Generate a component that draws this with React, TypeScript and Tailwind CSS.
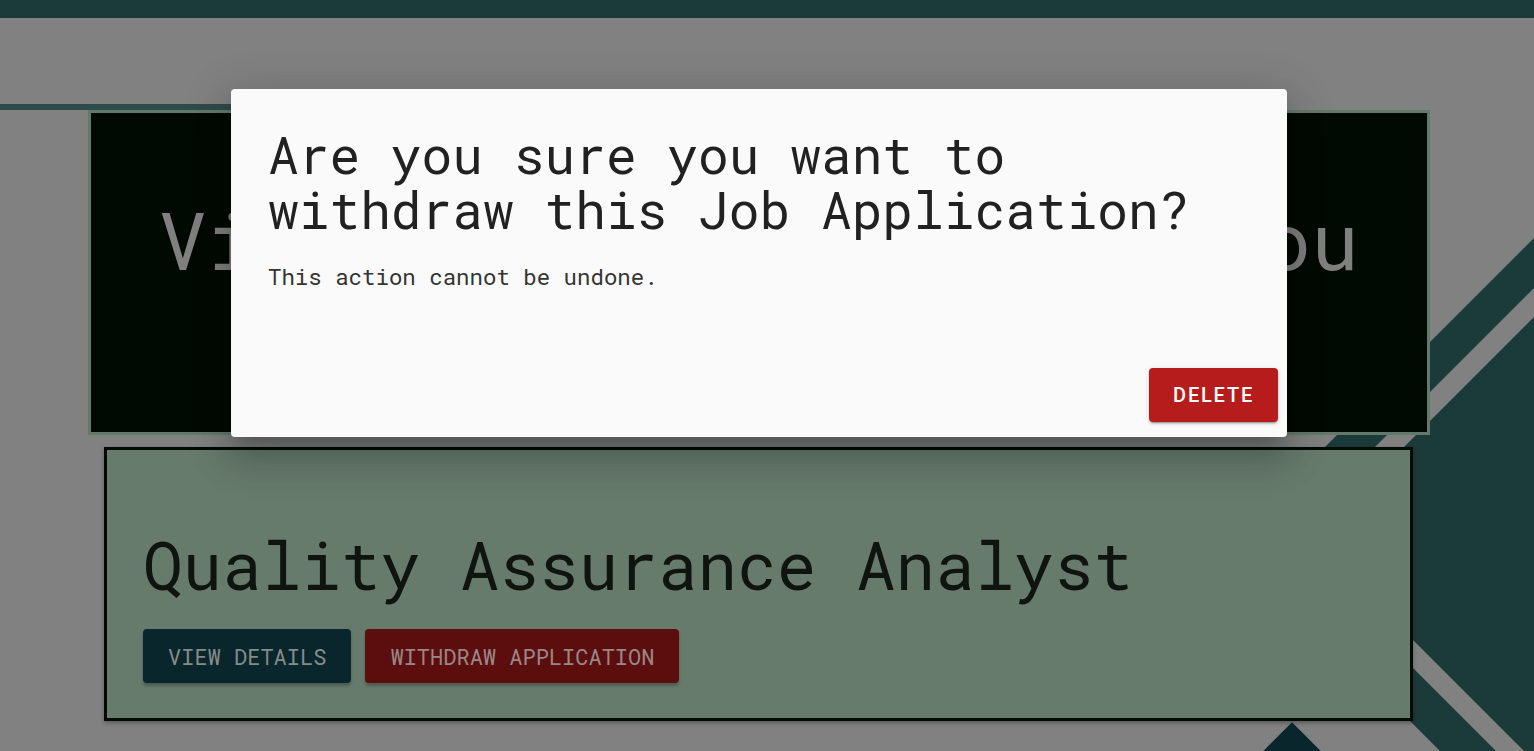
import React from "react";

const MONO = "font-['Roboto_Mono','DejaVu_Sans_Mono',monospace]";

function Stripes() {
  // decorative chevron in the lower right of the page
  return (
    <svg
      className="absolute inset-0 h-full w-full"
      viewBox="0 0 1534 751"
      preserveAspectRatio="none"
    >
      <polygon points="1230.5,541.5 1534,238 1534,845" fill="#1b3a3a" />
      <polygon points="1283.5,538.5 1534,288 1534,789" fill="#818181" />
      <polygon points="1312,539 1534,317 1534,761" fill="#1b3a3a" />
    </svg>
  );
}

export default function App() {
  return (
    <div className="relative h-[751px] w-full overflow-hidden bg-[#818181]">
      <Stripes />

      <div className="relative">
        {/* Top bar */}
        <div className="h-[18px] w-full bg-[#1b3a3a]" />

        {/* Header underline */}
        <div className="mt-[86px] h-[6px] w-[1100px] bg-[#2f4b49]" />

        {/* Hero card */}
        <div className="ml-[88px] flex h-[325px] w-[1342px] justify-center border-[3px] border-[#627a6c] bg-[#000a03] pt-[78px]">
          <h2 className={`${MONO} text-[80px] leading-[96px] text-[#808080] whitespace-nowrap`}>
            View Applications for You
          </h2>
        </div>

        {/* Application card */}
        <div className="ml-[104px] mt-[12px] flex h-[274px] w-[1309px] flex-col justify-end border-[3px] border-[#000a03] bg-[#677b6d] px-[36px] pb-[35px] shadow-[0_2px_4px_rgba(0,0,0,0.3)]">
          <h3 className={`${MONO} text-[66px] leading-[78px] text-[#0f140f] whitespace-nowrap`}>
            Quality Assurance Analyst
          </h3>
          <div className="mt-[25px] flex gap-[14px]">
            <button
              className={`${MONO} h-[54px] rounded-[4px] bg-[#08262b] px-[25px] text-[22px] uppercase text-[#858a8a] shadow-[0_3px_3px_rgba(0,0,0,0.25)]`}
            >
              View Details
            </button>
            <button
              className={`${MONO} h-[54px] rounded-[4px] bg-[#5c0e0e] px-[25px] text-[22px] uppercase text-[#9a8686] shadow-[0_3px_3px_rgba(0,0,0,0.25)]`}
            >
              Withdraw Application
            </button>
          </div>
        </div>
      </div>

      {/* Scroll-up diamond peeking under the card */}
      <div className="absolute left-[1271px] top-[731px] h-[42px] w-[42px] rotate-45 bg-[#08262b]" />

      {/* Confirm dialog */}
      <div className="absolute left-[231px] top-[89px] flex h-[348px] w-[1056px] flex-col rounded-[4px] bg-[#fafafa] shadow-[0_11px_15px_-7px_rgba(0,0,0,0.2),0_24px_38px_3px_rgba(0,0,0,0.14),0_9px_46px_8px_rgba(0,0,0,0.12)]">
        <div className="px-[37px] pt-[38px]">
          <h1 className={`${MONO} text-[51.2px] leading-[55px] text-[#212121]`}>
            Are you sure you want to withdraw this Job Application?
          </h1>
          <p className={`${MONO} mt-[23px] text-[22.4px] leading-[33px] text-[#333333]`}>
            This action cannot be undone.
          </p>
        </div>
        <div className="mt-auto flex justify-end pb-[15px] pr-[9px]">
          <button className="h-[54px] rounded-[4px] bg-[#b71c1c] px-[24px] font-['Roboto','Liberation_Sans',sans-serif] text-[20px] font-medium uppercase tracking-[1.8px] text-white shadow-[0_3px_1px_-2px_rgba(0,0,0,0.2),0_2px_2px_0_rgba(0,0,0,0.14),0_1px_5px_0_rgba(0,0,0,0.12)]">
            Delete
          </button>
        </div>
      </div>
    </div>
  );
}
